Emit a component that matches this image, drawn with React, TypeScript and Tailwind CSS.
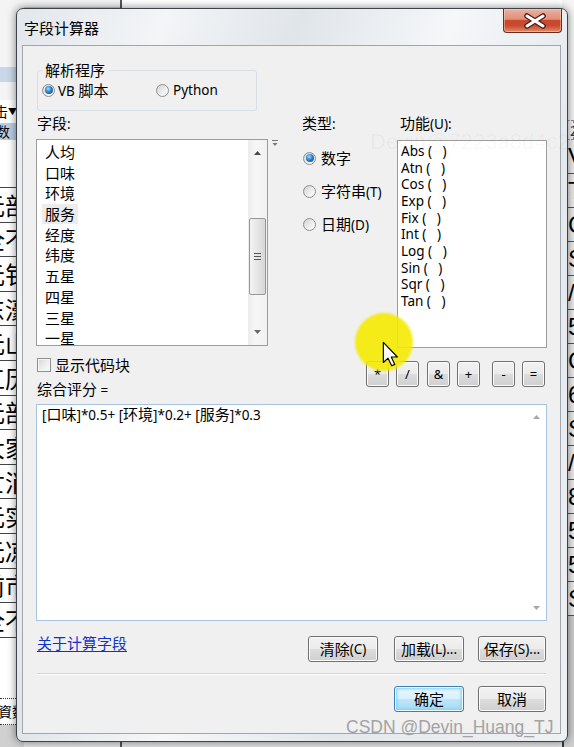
import React from 'react';

const CJK = /([\u2e80-\u9fff\uff00-\uffef]+)/;

// CJK runs a bit bigger than the latin bits, like the Win7 dialog font mix
function Txt({ s }: { s: string }) {
    return (
        <>
            {s.split(CJK).filter(Boolean).map((p, i) => (
                <span key={i} className={CJK.test(p) ? 'text-[15px]' : 'text-[13.5px]'}>{p}</span>
            ))}
        </>
    );
}

function Radio({ on }: { on?: boolean }) {
    return (
        <span className="flex h-[13px] w-[13px] shrink-0 items-center justify-center rounded-full border border-[#8e8f8f] bg-[linear-gradient(135deg,#d2d2d2,#ededed_55%,#ffffff)]">
            {on && <span className="h-[8px] w-[8px] rounded-full bg-[radial-gradient(circle_at_40%_35%,#a6dcff_0%,#2f7fcc_45%,#0a3c74_100%)]" />}
        </span>
    );
}

function Tri({ up, fill }: { up?: boolean; fill: string }) {
    return (
        <svg width="7" height="4" viewBox="0 0 7 4">
            <path d={up ? 'M0 4 L3.5 0 L7 4 Z' : 'M0 0 L3.5 4 L7 0 Z'} fill={fill} />
        </svg>
    );
}

function Btn({ children, className = '', primary }: { children: React.ReactNode; className?: string; primary?: boolean }) {
    return (
        <button
            className={`flex h-[26px] shrink-0 items-center justify-center rounded-[3px] border leading-[18px] ${primary
                ? 'border-[#3c7fb1] bg-[linear-gradient(#eaf6fd_0%,#d9f0fc_50%,#bee6fd_50%,#a7d9f5_100%)] shadow-[inset_0_0_0_1px_#f2fafe,inset_0_0_3px_2px_#7fd0f5]'
                : 'border-[#707070] bg-[linear-gradient(#f2f2f2_0%,#ebebeb_50%,#dddddd_50%,#cfcfcf_100%)] shadow-[inset_0_0_0_1px_#fcfcfc]'} ${className}`}
        >
            {children}
        </button>
    );
}

const FIELDS = ['人均', '口味', '环境', '服务', '经度', '纬度', '五星', '四星', '三星', '一星'];
const FUNCS = ['Abs', 'Atn', 'Cos', 'Exp', 'Fix', 'Int', 'Log', 'Sin', 'Sqr', 'Tan'];
const LEFT_ROWS = ['元部', '全不', '元钅', '东濠', '元山', '工历', '元部', '大家', '亡消', '元实', '元凉', '前市', '全不'];
const RIGHT_ROWS = ['V', 'T', 'C', 'S', '/', '5', 'C', '6', 'S', '/', '8', '5', '5', 'S'];

function LeftDesk() {
    return (
        <div className="absolute left-0 top-0 flex h-[747px] w-[24px] flex-col overflow-hidden bg-[#f4f4f4] font-['Noto_Sans_CJK_SC',sans-serif]">
            <div className="h-[67px]" />
            <div className="h-[15px] bg-[#c9d7e8]" />
            <div className="h-[18px]" />
            <div className="flex h-[23px] items-center whitespace-nowrap bg-white text-[14px]">
                <span className="-ml-[6px]">击</span>
                <span className="text-[9px]">▼</span>
            </div>
            <div className="flex h-[17px] items-center whitespace-nowrap bg-[#bccde3] text-[14px]">
                <span className="-ml-[4px]">数</span>
            </div>
            <div className="h-[47px] bg-white" />
            <div className="flex flex-col border-t border-[#444] bg-white">
                {LEFT_ROWS.map((r, i) => (
                    <div key={i} className="flex h-[34.6px] items-center overflow-hidden border-b border-[#444] text-[24px] leading-none">
                        <span className="-ml-[19px] whitespace-nowrap">{r}</span>
                    </div>
                ))}
            </div>
            <div className="h-[60px] bg-white" />
            <div className="flex h-[27px] items-center overflow-hidden whitespace-nowrap border-y border-dotted border-[#333] bg-white text-[14px]">
                <span className="-ml-[2px]">資数</span>
            </div>
            <div className="flex-1 bg-[#d0d0d0]" />
        </div>
    );
}

function RightDesk() {
    return (
        <div className="absolute left-[562px] top-0 flex h-[747px] w-[12px] flex-col overflow-hidden bg-[#f6f6f6]">
            <div className="h-[120px]" />
            <div className="flex h-[20px] items-center border border-dashed border-[#888] pl-[7px] text-[14px] text-[#333]">2</div>
            <div className="flex flex-col border-l-2 border-[#3a3a3a] bg-[#ececec]">
                {RIGHT_ROWS.map((r, i) => (
                    <div key={i} className="flex h-[34px] items-center border-b border-[#555] pl-[4px] font-['Liberation_Sans',sans-serif] text-[24px] leading-none">
                        {r}
                    </div>
                ))}
            </div>
            <div className="flex-1 border-l-2 border-[#3a3a3a] bg-[#cfcfcf]" />
        </div>
    );
}

export default function App() {
    return (
        <div className="relative h-[747px] w-[574px] overflow-hidden bg-[#e4e4e4] font-['Noto_Sans','Noto_Sans_CJK_SC',sans-serif] text-black">
            <LeftDesk />
            <RightDesk />
            <div className="absolute left-[24px] top-0 h-[8px] w-[96px] border-b border-[#cfcfcf] bg-[#f4f4f4]" />
            <div className="absolute left-[120px] top-0 h-[8px] w-[2px] bg-[#555]" />
            <div className="absolute left-[122px] top-0 h-[8px] w-[440px] bg-white" />
            <div className="absolute left-[120px] top-[740px] h-[7px] w-[2px] bg-[#555]" />

            {/* the dialog window */}
            <div className="absolute left-[16px] top-[8px] flex h-[734px] w-[552px] flex-col rounded-[7px] border border-[#3e4349] bg-[linear-gradient(112deg,#e2e7ec_0%,#f3f5f7_18%,#e0e5ea_34%,#f5f7f9_52%,#e3e8ed_72%,#eef1f4_100%)] shadow-[0_0_9px_rgba(0,0,0,0.5)]">
                <div className="flex h-[36px] shrink-0 items-start justify-between pl-[7px] pr-[5px]">
                    <div className="mt-[10px] text-[15px] leading-[18px]">字段计算器</div>
                    <button className="relative h-[24px] w-[59px] rounded-b-[4px] border border-t-0 border-[#6b2c1f] bg-[linear-gradient(#ebb2a4_0%,#df8e77_45%,#c8492d_50%,#c94a2d_72%,#e08d6c_100%)] shadow-[inset_0_0_0_1px_rgba(255,220,200,0.45)]">
                        <svg className="absolute left-0 top-0" width="59" height="24" viewBox="0 0 59 24">
                            <path d="M23 7 L39 17 M39 7 L23 17" stroke="#4a1d14" strokeWidth="5.5" strokeLinecap="round" />
                            <path d="M23 7 L39 17 M39 7 L23 17" stroke="#ffffff" strokeWidth="3" strokeLinecap="round" />
                        </svg>
                    </button>
                </div>

                <div className="pb-[7px] pl-[5px] pr-[6px]">
                    <div className="flex h-[689px] w-[539px] flex-col border border-[#a0a6ad] bg-[#f0f0f0] pl-[14px] pr-[13px]">
                        <fieldset className="mt-[15px] w-[220px] rounded-[3px] border border-[#d5dfe5] pb-[9px] pl-[4px]">
                            <legend className="px-[3px] text-[15px] leading-[18px]">解析程序</legend>
                            <div className="flex h-[22px] items-center leading-[18px]">
                                <label className="flex w-[114px] items-center gap-[3px]">
                                    <Radio on />
                                    <span><Txt s="VB 脚本" /></span>
                                </label>
                                <label className="flex items-center gap-[4px]">
                                    <Radio />
                                    <span className="text-[13.5px]">Python</span>
                                </label>
                            </div>
                        </fieldset>

                        <div className="mt-[3px] flex">
                            <div className="w-[265px]">
                                <div className="h-[18px] leading-[18px]"><Txt s="字段:" /></div>
                                <div className="mt-[7px] flex items-start">
                                    <div className="-ml-px flex h-[207px] w-[232px] border border-[#9c9c9c] bg-white">
                                        <div className="flex-1 overflow-hidden pl-[5px]">
                                            {FIELDS.map((f) => (
                                                <div key={f} className="h-[20.7px]">
                                                    <span className={`inline-block h-[20px] px-[3px] text-[15px] leading-[20.7px] ${f === '服务' ? 'bg-[#ececec]' : ''}`}>{f}</span>
                                                </div>
                                            ))}
                                        </div>
                                        <div className="flex w-[19px] flex-col items-center bg-[linear-gradient(90deg,#ececec,#f7f7f7_40%,#f1f1f1)]">
                                            <div className="flex h-[26px] items-center"><Tri up fill="#4a4a4a" /></div>
                                            <div className="mt-[52px] flex h-[77px] w-[17px] flex-col items-center justify-center gap-[2px] rounded-[2px] border border-[#979797] bg-[linear-gradient(90deg,#f3f3f3,#e6e6e6_50%,#d6d6d6)]">
                                                <span className="h-px w-[7px] bg-[#555]" />
                                                <span className="h-px w-[7px] bg-[#555]" />
                                                <span className="h-px w-[7px] bg-[#555]" />
                                            </div>
                                            <div className="flex-1" />
                                            <div className="flex h-[26px] items-center"><Tri fill="#6a6a6a" /></div>
                                        </div>
                                    </div>
                                    <svg className="ml-[4px] mt-[1px]" width="6" height="7" viewBox="0 0 6 7">
                                        <path d="M0 0.5 H6" stroke="#777" strokeWidth="1" />
                                        <path d="M0.5 3 L3 6 L5.5 3 Z" fill="#777" />
                                    </svg>
                                </div>
                            </div>

                            <div className="w-[95px] leading-[18px]">
                                <div className="h-[18px]"><Txt s="类型:" /></div>
                                <div className="mt-[15px] flex flex-col gap-[11px] pl-px">
                                    <label className="flex h-[22px] items-center gap-[5px]"><Radio on /><span><Txt s="数字" /></span></label>
                                    <label className="flex h-[22px] items-center gap-[5px]"><Radio /><span><Txt s="字符串(T)" /></span></label>
                                    <label className="flex h-[22px] items-center gap-[5px]"><Radio /><span><Txt s="日期(D)" /></span></label>
                                </div>
                            </div>

                            <div className="w-[150px]">
                                <div className="h-[18px] pl-[3px] leading-[18px]"><Txt s="功能(U):" /></div>
                                <div className="mt-[8px] h-[208px] border border-[#9c9c9c] bg-white pl-[3px] pt-[2px]">
                                    {FUNCS.map((f) => (
                                        <div key={f} className="h-[16.67px] whitespace-pre text-[13.5px] leading-[16.67px]">{f} (   )</div>
                                    ))}
                                </div>
                            </div>
                        </div>

                        <div className="mt-[9px] flex justify-between">
                            <div className="leading-[18px]">
                                <div className="flex h-[16px] items-center gap-[4px]">
                                    <span className="h-[14px] w-[14px] border border-[#8e8f8f] bg-[linear-gradient(135deg,#d4d4d4,#eeeeee_55%,#fbfbfb)] shadow-[inset_0_0_0_1px_#f6f6f6]" />
                                    <span><Txt s="显示代码块" /></span>
                                </div>
                                <div className="mt-[7px] h-[18px]"><Txt s="综合评分 =" /></div>
                            </div>
                            <div className="mr-[2px] mt-[4px] flex">
                                <Btn className="w-[23px] text-[13px]">*</Btn>
                                <Btn className="ml-[7px] w-[23px] text-[13px]">/</Btn>
                                <Btn className="ml-[8px] w-[23px] text-[13px]">&amp;</Btn>
                                <Btn className="ml-[7px] w-[23px] text-[13px]">+</Btn>
                                <Btn className="ml-[12px] w-[23px] text-[13px]">-</Btn>
                                <Btn className="ml-[7px] w-[23px] text-[13px]">=</Btn>
                            </div>
                        </div>

                        <div className="-ml-px mt-[6px] flex h-[217px] w-[511px] border border-[#a9c4e1] bg-white">
                            <div className="flex-1 pl-[5px] leading-[18px]">
                                <Txt s="[口味]*0.5+ [环境]*0.2+ [服务]*0.3" />
                            </div>
                            <div className="flex w-[19px] flex-col items-center">
                                <div className="flex h-[24px] items-center"><Tri up fill="#a8a8a8" /></div>
                                <div className="flex-1" />
                                <div className="flex h-[24px] items-center"><Tri fill="#a8a8a8" /></div>
                            </div>
                        </div>

                        <div className="mr-px mt-[13px] flex items-start">
                            <a className="h-[18px] leading-[18px] text-[#1032cc] underline underline-offset-2"><Txt s="关于计算字段" /></a>
                            <Btn className="ml-auto mt-[2px] w-[70px]"><Txt s="清除(C)" /></Btn>
                            <Btn className="ml-[16px] mt-[2px] w-[70px]"><Txt s="加载(L)..." /></Btn>
                            <Btn className="ml-[14px] mt-[2px] w-[68px]"><Txt s="保存(S)..." /></Btn>
                        </div>

                        <div className="mr-px mt-[11px] h-[2px] border-t border-[#d3d3d3] border-b border-b-white" />

                        <div className="mr-px mt-[11px] flex justify-end">
                            <Btn primary className="w-[70px]"><Txt s="确定" /></Btn>
                            <Btn className="ml-[14px] w-[68px]"><Txt s="取消" /></Btn>
                        </div>
                    </div>
                </div>
            </div>

            {/* overlays from the screen recording */}
            <div className="pointer-events-none absolute left-[370px] top-[129px] whitespace-nowrap font-['Liberation_Sans',sans-serif] text-[22px] leading-[26px] text-black/[0.035]">Devin@7223a8d4c2</div>
            <div className="pointer-events-none absolute left-[355px] top-[313px] h-[58px] w-[58px] rounded-full bg-[#f5ea00]/[0.9] blur-[1px]" />
            <svg className="pointer-events-none absolute left-[382px] top-[341px]" width="17" height="26" viewBox="0 0 13 20">
                <path d="M1 1 L1 16.5 L4.6 13.2 L7.4 19 L9.8 18 L7.1 12.3 L11.8 12.3 Z" fill="#ffffff" stroke="#000" strokeWidth="0.9" strokeLinejoin="round" />
            </svg>
            <div className="pointer-events-none absolute left-[346px] top-[716px] whitespace-nowrap font-['Liberation_Sans',sans-serif] text-[17.5px] leading-[22px] text-[#a3a3a3]">CSDN @Devin_Huang_TJ</div>
        </div>
    );
}
